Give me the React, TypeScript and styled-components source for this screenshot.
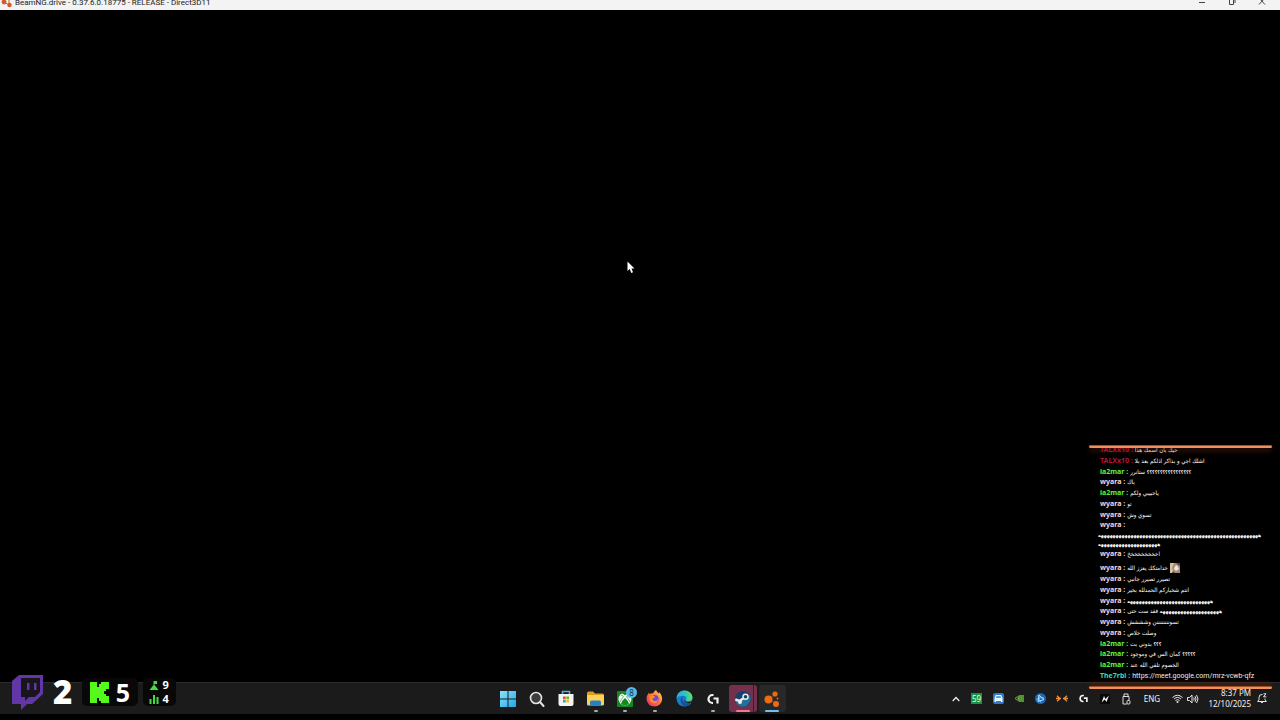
import React from 'react';
import styled, { createGlobalStyle } from 'styled-components';

const Global = createGlobalStyle`
  * { box-sizing: border-box; }
  body { margin: 0; background: #000; font-family: 'Noto Sans', 'Open Sans', 'DejaVu Sans', sans-serif; }
  button { border: 0; padding: 0; margin: 0; background: none; color: inherit; font: inherit; }
`;

const Desktop = styled.div`
  position: relative;
  display: flex;
  flex-direction: column;
  height: 100vh;
  padding-bottom: 6px;
  overflow: hidden;
  background: #000;
`;

const TitleBar = styled.header`
  display: flex;
  flex: none;
  align-items: flex-start;
  height: 10px;
  padding-right: 3px;
  overflow: hidden;
  background: #f3f3f3;
`;

const TitleText = styled.h1`
  flex: 1;
  margin: 0 0 0 3px;
  color: #222;
  font: 400 8px/6px Roboto, 'Open Sans', sans-serif;
  white-space: nowrap;
`;

const WindowButton = styled.button`
  display: flex;
  justify-content: center;
  width: 30px;
  height: 10px;
`;

const GameView = styled.main`
  flex: 1;
  background: #000;
`;

const Cursor = styled.svg`
  position: absolute;
  left: 49%;
  bottom: 62%;
`;

const Taskbar = styled.footer`
  display: grid;
  grid-template-columns: 1fr auto 1fr;
  flex: none;
  height: 32px;
  border-top: 1px solid #2b2b2b;
  background: #1b1b1b;
`;

const Apps = styled.nav`
  display: grid;
  grid-template-columns: repeat(10, 1fr);
  grid-column: 2;
  width: 294px;
`;

const AppButton = styled.button<{ $bg?: string }>`
  position: relative;
  display: flex;
  align-items: center;
  justify-content: center;
  margin: 2px 1px;
  border-radius: 3px;
  background: ${(p) => p.$bg ?? 'transparent'};
`;

const Indicator = styled.span<{ $color: string; $wide?: boolean }>`
  position: absolute;
  bottom: 0;
  left: 50%;
  width: ${(p) => (p.$wide ? 14 : 4)}px;
  height: 2px;
  border-radius: 1px;
  background: ${(p) => p.$color};
  transform: translateX(-50%);
`;

const Count = styled.span`
  position: absolute;
  top: 2px;
  right: 2px;
  width: 11px;
  height: 11px;
  border-radius: 50%;
  background: #5ab9e6;
  color: #12384a;
  font-size: 8px;
  line-height: 11px;
  text-align: center;
`;

const Tray = styled.div`
  display: flex;
  align-items: center;
  justify-content: flex-end;
  padding-right: 11px;
  color: #f2f2f2;
`;

const TrayIcons = styled.div`
  display: grid;
  grid-template-columns: repeat(9, 1fr);
  width: 192px;
`;

const TrayButton = styled.button<{ $width?: number }>`
  display: flex;
  align-items: center;
  justify-content: center;
  width: ${(p) => (p.$width ? `${p.$width}px` : 'auto')};
  height: 30px;
`;

const Language = styled(TrayButton)`
  margin-right: 2px;
  font-size: 8px;
`;

const Clock = styled.button`
  width: 50px;
  margin-right: 4px;
  padding-bottom: 2px;
  font-size: 8px;
  line-height: 11px;
  text-align: right;
  white-space: nowrap;
`;

const Stats = styled.aside`
  position: absolute;
  left: 11px;
  bottom: 10px;
  display: flex;
  align-items: center;
  gap: 5px;
  color: #fff;
  font-family: 'Noto Sans', sans-serif;
  font-weight: 900;
`;

const TwitchStat = styled.div`
  display: flex;
  align-items: center;
  gap: 9px;
  width: 66px;
  font-size: 33px;
  line-height: 36px;
`;

const StatBox = styled.div`
  display: flex;
  align-items: center;
  justify-content: center;
  gap: 7px;
  width: 56px;
  height: 28px;
  border-radius: 5px;
  background: #080808;
  font-size: 25px;
  font-weight: 700;
  line-height: 26px;
`;

const SmallStats = styled.div`
  display: grid;
  grid-template-columns: 10px 8px;
  align-items: center;
  align-content: center;
  justify-content: center;
  column-gap: 4px;
  width: 33px;
  height: 28px;
  border-radius: 5px;
  background: #080808;
  font-size: 11px;
  font-weight: 700;
  line-height: 14px;
`;

const Chat = styled.section`
  position: absolute;
  right: 8px;
  bottom: 31px;
  display: flex;
  width: 183px;
  height: 244px;
  flex-direction: column;
`;

const Glow = styled.div<{ $up?: boolean }>`
  position: relative;
  z-index: 1;
  flex: none;
  height: 3px;
  border-top: 1px solid #a04f27;
  border-radius: 2px;
  background: #f0905c;
  box-shadow: 0 ${(p) => (p.$up ? -3 : 3)}px 5px #7a2c0c88;
`;

const Messages = styled.ul`
  display: flex;
  flex: 1;
  flex-direction: column;
  justify-content: space-between;
  min-height: 0;
  margin: -3px 0 5px;
  padding: 0 0 0 11px;
  list-style: none;
`;

const Message = styled.li<{ $tall?: boolean }>`
  display: flex;
  flex: none;
  align-items: ${(p) => (p.$tall ? 'flex-end' : 'center')};
  gap: 2px;
  height: ${(p) => (p.$tall ? 14 : 10)}px;
  color: #fff;
  font: 400 7px/10px Roboto, 'Noto Sans', sans-serif;
  white-space: nowrap;
`;

const Name = styled.b<{ $color: string }>`
  color: ${(p) => p.$color};
  font: 700 7px/10px 'Noto Sans', sans-serif;
`;

const Body = styled.bdi`
  font-family: 'DejaVu Sans Condensed', 'DejaVu Sans', sans-serif;
  font-size: 6px;
`;

const Dense = styled.span`
  font-size: 5px;
  font-weight: 700;
`;

const Overflow = styled.li`
  flex: none;
  margin-left: -2px;
  color: #fff;
  font: 700 5px/8px 'DejaVu Sans Condensed', 'DejaVu Sans', sans-serif;
  white-space: nowrap;
`;

const Link = styled.a`
  color: #eee;
  text-decoration: none;
`;

const Emote = styled.svg`
  flex: none;
`;

const heh = (n: number) => 'ه'.repeat(n);
const ask = (n: number) => '؟'.repeat(n);

const colors: Record<string, string> = {
  TALXx10: '#b5123c',
  ia2mar: '#5cf53c',
  wyara: '#f6d3e0',
  The7rbi: '#35dfae',
};

type Entry = { who: string; text?: string; denseStart?: string; more?: string[]; emote?: boolean; link?: string };

const chat: Entry[] = [
  { who: 'TALXx10', text: 'حيك بان اسمك هذا' },
  { who: 'TALXx10', text: 'اشلك اجي و بذاكر اذلكم بعد بلا' },
  { who: 'ia2mar', denseStart: ask(17), text: ' ستانرر' },
  { who: 'wyara', text: 'باك' },
  { who: 'ia2mar', text: 'ياحبيبي ولكم' },
  { who: 'wyara', text: 'تو' },
  { who: 'wyara', text: 'تسوي وش' },
  { who: 'wyara', more: [heh(55), heh(21)] },
  { who: 'wyara', text: 'اخخخخخخخخخ' },
  { who: 'wyara', text: 'خدامتكك يعزز الله', emote: true },
  { who: 'wyara', text: 'تصيرر تصيرر جانبي' },
  { who: 'wyara', text: 'انتم شخباركم الحمدلله بخير' },
  { who: 'wyara', denseStart: heh(29) },
  { who: 'wyara', denseStart: heh(21), text: ' فقد ست حتى' },
  { who: 'wyara', text: 'تسوننننننننن وشششش' },
  { who: 'wyara', text: 'وصلت خلاص' },
  { who: 'ia2mar', denseStart: ask(3), text: ' بدوني بث' },
  { who: 'ia2mar', denseStart: ask(5), text: ' كمان الس في وموجود' },
  { who: 'ia2mar', text: 'الخصوم تلقي الله عند' },
  { who: 'The7rbi', link: 'https://meet.google.com/mrz-vcwb-qfz' },
];

const Nodes = ({ size, color }: { size: number; color: string }) => (
  <svg width={size} height={size} viewBox="0 0 18 18" fill={color} stroke={color}>
    <path d="M6 10L12 4M6 10L14 13" strokeWidth="1" stroke="#66452f" />
    <circle cx="5.500" cy="9.500" r="4" stroke="none" />
    <circle cx="12" cy="4" r="2.600" stroke="none" />
    <circle cx="14.500" cy="8.500" r="1" stroke="none" />
    <circle cx="13" cy="14" r="3" stroke="none" />
  </svg>
);

const LogiG = ({ size }: { size: number }) => (
  <svg width={size} height={size} viewBox="0 0 12 12" fill="none" stroke="#f4f4f4" strokeWidth="2.200">
    <path d="M6.500 2H5.500A4 4 0 0 0 5.500 10H6M6.500 5.500H10.500V10.500" />
  </svg>
);

const apps: { name: string; icon: React.ReactNode; bg?: string; mark?: string; wide?: boolean; count?: string }[] = [
  {
    name: 'Start',
    icon: (
      <svg width="16" height="16" viewBox="0 0 16 16">
        <defs>
          <linearGradient id="win" x2="1" y2="1"><stop stopColor="#8be3fc" /><stop offset="1" stopColor="#22a7e6" /></linearGradient>
        </defs>
        <path fill="url(#win)" d="M0 0H7.500V7.500H0ZM8.500 0H16V7.500H8.500ZM0 8.500H7.500V16H0ZM8.500 8.500H16V16H8.500Z" />
      </svg>
    ),
  },
  {
    name: 'Search',
    icon: (
      <svg width="16" height="16" viewBox="0 0 16 16" fill="#3c3c3c" stroke="#e4e4e4" strokeLinecap="round">
        <circle cx="7" cy="7" r="5.500" strokeWidth="1.600" />
        <path d="M11 11L14.500 15" strokeWidth="2" />
      </svg>
    ),
  },
  {
    name: 'Microsoft Store',
    icon: (
      <svg width="16" height="17" viewBox="0 0 16 17">
        <path d="M4.500 5V1.500H11.500V5" fill="none" stroke="#4cb4e4" strokeWidth="1.600" />
        <path d="M0.500 4H15.500V14Q15.500 16 13.500 16H2.500Q0.500 16 0.500 14Z" fill="#f4f4f4" />
        <path d="M5 6.500H7.700V9.200H5Z" fill="#e8502c" />
        <path d="M8.300 6.500H11V9.200H8.300Z" fill="#72b62c" />
        <path d="M5 9.800H7.700V12.500H5Z" fill="#2a9fe0" />
        <path d="M8.300 9.800H11V12.500H8.300Z" fill="#f5b91c" />
      </svg>
    ),
  },
  {
    name: 'File Explorer',
    mark: '#aaa',
    icon: (
      <svg width="17" height="15" viewBox="0 0 17 15">
        <path d="M0 2Q0 0.500 1.500 0.500H6L8 2.500H15.500Q17 2.500 17 4V8H0Z" fill="#dc9d24" />
        <path d="M0 4H17V13Q17 14.500 15.500 14.500H1.500Q0 14.500 0 13Z" fill="#fad25a" />
        <path d="M3 14.500V11Q3 9.500 4.500 9.500H12.500Q14 9.500 14 11V14.500Z" fill="#2580c4" />
      </svg>
    ),
  },
  {
    name: 'Xbox',
    mark: '#aaa',
    count: '8',
    icon: (
      <svg width="16" height="16" viewBox="0 0 16 16">
        <rect width="16" height="16" rx="1" fill="#128a20" />
        <circle cx="8" cy="8" r="6.500" fill="#f4f9f4" />
        <path d="M4.500 2.600Q6 2.600 8 4.300Q10 2.600 11.500 2.600Q10 1 8 1T4.500 2.600Z" fill="#128a20" />
        <path d="M4 12.800Q5 9.500 8 7Q11 9.500 12 12.800Q10 14.500 8 14.500T4 12.800Z" fill="#128a20" />
        <path d="M3.200 11Q4 8 6.500 5.600Q5 4.200 3.800 4M12.800 11Q12 8 9.500 5.600Q11 4.200 12.200 4" stroke="#128a20" strokeWidth=".6" fill="none" />
      </svg>
    ),
  },
  {
    name: 'Firefox',
    mark: '#aaa',
    icon: (
      <svg width="17" height="17" viewBox="0 0 17 17">
        <defs>
          <linearGradient id="fox" x1="1" x2="0" y2="1"><stop stopColor="#ffe04a" /><stop offset=".5" stopColor="#ff7139" /><stop offset="1" stopColor="#e3246f" /></linearGradient>
        </defs>
        <path d="M10 0Q11 2 13 3.500V2Q17 6 16 10.500Q14.500 16 8.500 16.500Q1.500 16 0.500 9.500Q0.300 5.500 3 2.500L3.500 4Q5 3 7 3.500Q8 1 10 0Z" fill="url(#fox)" />
        <circle cx="8.600" cy="9" r="4" fill="#7542e5" />
        <path d="M3.500 6.500Q5 4.800 7.500 5.500L9.300 7Q8 8.300 6.500 8.500Q6.500 11 9 11Q11 11 12 9Q12 13 8.500 13.300Q4 13 3.500 9Z" fill="#ff8a2a" />
      </svg>
    ),
  },
  {
    name: 'Edge',
    icon: (
      <svg width="17" height="17" viewBox="0 0 17 17">
        <defs>
          <linearGradient id="edge" x2="1" y2="0"><stop stopColor="#28a7dc" /><stop offset=".6" stopColor="#32c9b6" /><stop offset="1" stopColor="#6bdd4d" /></linearGradient>
        </defs>
        <circle cx="8.500" cy="8.500" r="8" fill="#167fce" />
        <path d="M0.500 8Q1.500 0.500 8.500 0.500Q15.500 1 16.500 7Q16.500 11 12.500 11Q9.500 11 10 9.500Q11.500 7 8.500 6Q4.500 5 0.500 8Z" fill="url(#edge)" />
        <path d="M6.200 9Q6 7 8 6.300Q4.500 7 4.500 10.500Q5 15.500 9.500 16.300Q13.500 16 15.300 12.500Q12 14 9 12.700Q6.500 11.500 6.200 9Z" fill="#164f9d" />
        <path d="M8.500 9Q8.500 11.500 11.500 12Q14 12.300 17 10.500V12.600L15.300 12.400Q12 13.500 9.500 12.200Q7.500 10.800 8.500 9Z" fill="#1b1b1b" />
      </svg>
    ),
  },
  { name: 'Logitech G HUB', mark: '#aaa', icon: <LogiG size={12} /> },
  {
    name: 'Steam',
    mark: '#f4788c',
    wide: true,
    bg: 'linear-gradient(90deg, #74304c 0 87%, #3a1c28 87% 91%, #74304c 91%)',
    icon: (
      <svg width="16" height="16" viewBox="0 0 16 16">
        <circle cx="8" cy="8" r="8" fill="#17406c" />
        <path d="M0.300 9.500L4.500 11L8 8.500L8 6L15 4Q17 10 12 14.500Q7 17.500 2.500 13.800Q0.800 12 0.300 9.500Z" fill="#257096" />
        <path d="M0.300 8.500L4.700 10L8 7.500" fill="none" stroke="#eee" strokeWidth="2.400" />
        <circle cx="10.500" cy="5.800" r="2.500" fill="#17406c" stroke="#eee" strokeWidth="1.400" />
        <circle cx="5" cy="11" r="2" fill="#eee" />
      </svg>
    ),
  },
  { name: 'BeamNG.drive', mark: '#6fc0ee', wide: true, bg: '#282828', icon: <Nodes size={18} color="#ee6a14" /> },
];

const tray: { name: string; icon: React.ReactNode }[] = [
  {
    name: 'Show hidden icons',
    icon: <svg width="8" height="6" viewBox="0 0 8 6" fill="none" stroke="#eee" strokeWidth="1.300"><path d="M0.700 5L4 1.500L7.300 5" /></svg>,
  },
  {
    name: 'Temperature',
    icon: (
      <svg width="11" height="11" viewBox="0 0 11 11">
        <rect width="11" height="11" fill="#159447" />
        <text x="5.500" y="8.500" textAnchor="middle" fill="#e6fff0" fontSize="8" fontFamily="Noto Sans">59</text>
      </svg>
    ),
  },
  {
    name: 'Vehicle',
    icon: (
      <svg width="11" height="11" viewBox="0 0 11 11">
        <rect width="11" height="11" rx="2" fill="#2c7ccd" />
        <path d="M2.700 2H8.300L9.500 5.200V9H8V8H3V9H1.500V5.200Z" fill="#eff7ff" />
        <path d="M3.500 3H7.500L8.200 5H2.800Z" fill="#5fa2df" />
      </svg>
    ),
  },
  {
    name: 'NVIDIA',
    icon: (
      <svg width="9" height="7" viewBox="0 0 9 7">
        <path d="M3.500 0H9V7H3.500Z" fill="#50922d" />
        <path d="M0 3.500Q3 0 6.500 3.500Q3.500 7 0 3.500Z" fill="#1f3b14" stroke="#78bd41" strokeWidth=".9" />
        <circle cx="3.700" cy="3.500" r="1" fill="#8cce59" />
      </svg>
    ),
  },
  {
    name: 'Battle.net',
    icon: (
      <svg width="11" height="11" viewBox="0 0 11 11" fill="none" stroke="#b5e0ff">
        <circle cx="5.500" cy="5.500" r="5.500" fill="#1768b8" stroke="none" />
        <path d="M4 2L9 6.500L3 8.500Z" strokeWidth="1" />
        <path d="M1.500 6.500Q5 3.500 9 5M6 9.500Q2.800 6 4 2" strokeWidth=".7" />
      </svg>
    ),
  },
  {
    name: 'Link status',
    icon: (
      <svg width="12" height="7" viewBox="0 0 12 7" fill="none" stroke="#ec9135" strokeWidth="1.300">
        <path d="M1 0.700L4 3.500L1 6.300M11 0.700L8 3.500L11 6.300M0 3.500H5M7 3.500H12" />
      </svg>
    ),
  },
  { name: 'G HUB', icon: <LogiG size={9} /> },
  {
    name: 'Wave Link',
    icon: (
      <svg width="10" height="10" viewBox="0 0 10 10">
        <rect width="10" height="10" fill="#080808" />
        <path d="M1.500 8.500L4 2L5.500 5L9 1.500L6.500 8L4.700 5.500Z" fill="#f5f5f5" />
      </svg>
    ),
  },
  {
    name: 'Safely remove hardware',
    icon: (
      <svg width="9" height="12" viewBox="0 0 9 12" fill="none" stroke="#ddd">
        <path d="M2 3.500V1H6V3.500M1 3.500H7V7M1 3.500V11H5" />
        <rect x="5" y="7.500" width="3" height="3.500" rx="1" />
      </svg>
    ),
  },
];

export default function App() {
  return (
    <Desktop>
      <Global />
      <TitleBar>
        <svg width="12" height="8" viewBox="0 0 12 8" fill="#d65a28" stroke="#d65a28">
          <circle cx="4" cy="2" r="2.400" stroke="none" />
          <path d="M4 2L9 5M9 0V5" fill="none" />
          <circle cx="9.500" cy="5" r="2.200" stroke="none" />
        </svg>
        <TitleText>BeamNG.drive - 0.37.6.0.18775 - RELEASE - Direct3D11</TitleText>
        <WindowButton aria-label="Minimize">
          <svg width="8" height="8" viewBox="0 0 8 8" stroke="#444"><path d="M1 2.500H7" /></svg>
        </WindowButton>
        <WindowButton aria-label="Restore">
          <svg width="8" height="8" viewBox="0 0 8 8" fill="none" stroke="#444"><path d="M1.500 0V4.500H5.500V0M7 0V3" /></svg>
        </WindowButton>
        <WindowButton aria-label="Close">
          <svg width="8" height="8" viewBox="0 0 8 8" stroke="#444"><path d="M2 -1L7 4.500M6 -1L1 4.500" /></svg>
        </WindowButton>
      </TitleBar>

      <GameView />
      <Cursor width="8" height="13" viewBox="0 0 8 13">
        <path d="M0.500 0.500V10L2.700 8L4.300 12L6 11.200L4.500 7.500H7.500Z" fill="#fff" />
      </Cursor>

      <Taskbar>
        <Apps aria-label="Taskbar">
          {apps.map((a) => (
            <AppButton key={a.name} aria-label={a.name} $bg={a.bg}>
              {a.icon}
              {a.count && <Count>{a.count}</Count>}
              {a.mark && <Indicator $color={a.mark} $wide={a.wide} />}
            </AppButton>
          ))}
        </Apps>
        <Tray>
          <TrayIcons>
            {tray.map((t) => (
              <TrayButton key={t.name} aria-label={t.name}>{t.icon}</TrayButton>
            ))}
          </TrayIcons>
          <Language $width={30}>ENG</Language>
          <TrayButton $width={16} aria-label="Wi-Fi">
            <svg width="11" height="10" viewBox="0 0 11 10" fill="none" stroke="#e4e4e4">
              <path d="M0.500 3.500Q5.500 -1 10.500 3.500M2 5Q5.500 1.800 9 5M3.500 6.500Q5.500 4.700 7.500 6.500" />
              <circle cx="5.500" cy="8" r="1" fill="#eee" stroke="none" />
            </svg>
          </TrayButton>
          <TrayButton $width={16} aria-label="Volume">
            <svg width="12" height="10" viewBox="0 0 12 10" fill="none" stroke="#e4e4e4">
              <path d="M0.500 3.500H2.500L5 1V9L2.500 6.500H0.500ZM6.700 3.500Q7.700 5 6.700 6.500M8 2.200Q10 5 8 7.800M9.500 1Q12.500 5 9.500 9" />
            </svg>
          </TrayButton>
          <Clock>8:37 PM<br />12/10/2025</Clock>
          <TrayButton $width={14} aria-label="Notifications">
            <svg width="10" height="11" viewBox="0 0 10 11" fill="none" stroke="#e4e4e4">
              <path d="M5.500 1.500Q2 1 2 4.500V6.500L0.700 8.500H9.300L8 6.500V5.500M3.700 8.800Q5 11 6.300 8.800M6.500 0.800H9L6.500 3.800H9.300" />
            </svg>
          </TrayButton>
        </Tray>
      </Taskbar>

      <Stats aria-label="Viewer counts">
        <TwitchStat>
          <svg width="33" height="36" viewBox="0 0 33 36">
            <path d="M1 7L8 1H32V20L21 30H16L10 36V30H1Z" fill="#6336a8" />
            <path d="M10 4H29V18L24 23H18L14 27V23H10Z" fill="#18151d" />
            <path d="M16 9H18.500V16H16ZM23 9H25.500V16H23Z" fill="#6336a8" />
          </svg>
          <span>2</span>
        </TwitchStat>
        <StatBox>
          <svg width="19" height="21" viewBox="0 0 19 21">
            <path d="M0 0H7V5H9V2H11V0H19V7H16V9H14V12H16V14H19V21H11V19H9V16H7V21H0Z" fill="#54fa1c" />
          </svg>
          <span>5</span>
        </StatBox>
        <SmallStats>
          <svg width="10" height="9" viewBox="0 0 10 9" fill="#42df3c"><path d="M4.500 0H8V3H5.500V4L9.500 9H0.500L4.500 4Z" /></svg>
          <span>9</span>
          <svg width="10" height="9" viewBox="0 0 10 9" fill="#42df3c"><path d="M0.500 4H2.500V9H0.500ZM4 0H6V9H4ZM7.500 2H9.500V9H7.500Z" /></svg>
          <span>4</span>
        </SmallStats>
      </Stats>

      <Chat aria-label="Stream chat">
        <Glow />
        <Messages>
          {chat.map((m, i) => (
            <React.Fragment key={i}>
              <Message $tall={m.emote}>
                <Name $color={colors[m.who]}>{m.who} :</Name>
                {(m.text || m.denseStart) && (
                  <Body dir="rtl">{m.denseStart && <Dense>{m.denseStart}</Dense>}{m.text}</Body>
                )}
                {m.link && <Link href={m.link}>{m.link}</Link>}
                {m.emote && (
                  <Emote width="10" height="10" viewBox="0 0 10 10">
                    <rect width="10" height="10" fill="#a58a78" />
                    <path d="M0 0H4L2 5L4 10H0Z" fill="#d6c19a" />
                    <path d="M5 3L7 2L9 6L6 8L4 6Z" fill="#f0e4e0" />
                    <path d="M6 0H10V3L8 2ZM3 8L5 10H2Z" fill="#5b4238" />
                  </Emote>
                )}
              </Message>
              {m.more?.map((line, k) => <Overflow key={k}><bdi>{line}</bdi></Overflow>)}
            </React.Fragment>
          ))}
        </Messages>
        <Glow $up />
      </Chat>
    </Desktop>
  );
}
